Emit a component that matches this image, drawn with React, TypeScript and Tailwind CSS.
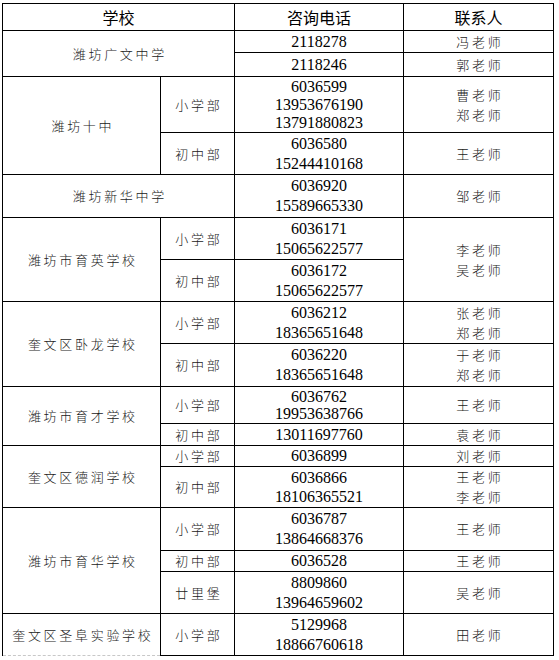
import * as React from "react";

const serif = "font-['Liberation_Serif','Times_New_Roman',serif] text-[16px] text-black";
const cjk = "font-['Noto_Sans_CJK_SC',sans-serif] font-light text-[13px] tracking-[2.7px] pl-[2.7px] text-[#1a1a1a]";
const head = "font-['Noto_Sans_CJK_SC',sans-serif] text-[16px] leading-[20px] text-black";

function Cell({
  children,
  className = "",
  rowSpan,
  colSpan,
}: {
  children?: React.ReactNode;
  className?: string;
  rowSpan?: number;
  colSpan?: number;
}) {
  return (
    <td
      rowSpan={rowSpan}
      colSpan={colSpan}
      className={`border border-black p-0 text-center align-middle ${className}`}
    >
      {children}
    </td>
  );
}

function Label({
  children,
  rowSpan,
  colSpan,
  className = "",
}: {
  children: React.ReactNode;
  rowSpan?: number;
  colSpan?: number;
  className?: string;
}) {
  return (
    <Cell rowSpan={rowSpan} colSpan={colSpan} className={`${cjk} leading-[18px] ${className}`}>
      {children}
    </Cell>
  );
}

function Phones({ lines, leading = "leading-[20px]" }: { lines: string[]; leading?: string }) {
  return (
    <Cell className={`${serif} ${leading}`}>
      {lines.map((line) => (
        <div key={line}>{line}</div>
      ))}
    </Cell>
  );
}

function Teachers({ names, rowSpan }: { names: string[]; rowSpan?: number }) {
  return (
    <Cell rowSpan={rowSpan} className={`${cjk} leading-[20px]`}>
      {names.map((name, i) => (
        <div key={`${name}-${i}`}>{name}</div>
      ))}
    </Cell>
  );
}

export default function App() {
  return (
    <div className="min-h-[660px] w-[559px] bg-white pl-[2px] pt-[3px]">
      <table className="w-[551px] table-fixed border-collapse">
        <colgroup>
          <col className="w-[158px]" />
          <col className="w-[74px]" />
          <col className="w-[169px]" />
          <col className="w-[150px]" />
        </colgroup>
        <tbody>
          <tr className="h-[27px]">
            <Cell colSpan={2} className={head}>
              学校
            </Cell>
            <Cell className={head}>咨询电话</Cell>
            <Cell className={head}>联系人</Cell>
          </tr>

          <tr className="h-[22px]">
            <Label rowSpan={2} colSpan={2}>
              潍坊广文中学
            </Label>
            <Phones lines={["2118278"]} leading="leading-[18px]" />
            <Teachers names={["冯老师"]} />
          </tr>
          <tr className="h-[24px]">
            <Phones lines={["2118246"]} leading="leading-[18px]" />
            <Teachers names={["郭老师"]} />
          </tr>

          <tr className="h-[56px]">
            <Label rowSpan={2}>潍坊十中</Label>
            <Label>小学部</Label>
            <Phones lines={["6036599", "13953676190", "13791880823"]} leading="leading-[18px]" />
            <Teachers names={["曹老师", "郑老师"]} />
          </tr>
          <tr className="h-[42px]">
            <Label>初中部</Label>
            <Phones lines={["6036580", "15244410168"]} />
            <Teachers names={["王老师"]} />
          </tr>

          <tr className="h-[43px]">
            <Label colSpan={2}>潍坊新华中学</Label>
            <Phones lines={["6036920", "15589665330"]} />
            <Teachers names={["邹老师"]} />
          </tr>

          <tr className="h-[42px]">
            <Label rowSpan={2}>潍坊市育英学校</Label>
            <Label>小学部</Label>
            <Phones lines={["6036171", "15065622577"]} />
            <Teachers names={["李老师", "吴老师"]} rowSpan={2} />
          </tr>
          <tr className="h-[42px]">
            <Label>初中部</Label>
            <Phones lines={["6036172", "15065622577"]} />
          </tr>

          <tr className="h-[42px]">
            <Label rowSpan={2}>奎文区卧龙学校</Label>
            <Label>小学部</Label>
            <Phones lines={["6036212", "18365651648"]} />
            <Teachers names={["张老师", "郑老师"]} />
          </tr>
          <tr className="h-[43px]">
            <Label>初中部</Label>
            <Phones lines={["6036220", "18365651648"]} />
            <Teachers names={["于老师", "郑老师"]} />
          </tr>

          <tr className="h-[37px]">
            <Label rowSpan={2}>潍坊市育才学校</Label>
            <Label>小学部</Label>
            <Phones lines={["6036762", "19953638766"]} leading="leading-[17.5px]" />
            <Teachers names={["王老师"]} />
          </tr>
          <tr className="h-[22px]">
            <Label>初中部</Label>
            <Phones lines={["13011697760"]} leading="leading-[18px]" />
            <Teachers names={["袁老师"]} />
          </tr>

          <tr className="h-[20px]">
            <Label rowSpan={2}>奎文区德润学校</Label>
            <Label>小学部</Label>
            <Phones lines={["6036899"]} leading="leading-[18px]" />
            <Teachers names={["刘老师"]} />
          </tr>
          <tr className="h-[41px]">
            <Label>初中部</Label>
            <Phones lines={["6036866", "18106365521"]} leading="leading-[19.5px]" />
            <Teachers names={["王老师", "李老师"]} />
          </tr>

          <tr className="h-[43px]">
            <Label rowSpan={3}>潍坊市育华学校</Label>
            <Label>小学部</Label>
            <Phones lines={["6036787", "13864668376"]} />
            <Teachers names={["王老师"]} />
          </tr>
          <tr className="h-[21px]">
            <Label>初中部</Label>
            <Phones lines={["6036528"]} leading="leading-[18px]" />
            <Teachers names={["王老师"]} />
          </tr>
          <tr className="h-[42px]">
            <Label>廿里堡</Label>
            <Phones lines={["8809860", "13964659602"]} />
            <Teachers names={["吴老师"]} />
          </tr>

          <tr className="h-[42px]">
            <Label className="border-b-[#c8c8c8] [border-bottom-style:dashed]">奎文区圣阜实验学校</Label>
            <Label>小学部</Label>
            <Phones lines={["5129968", "18866760618"]} />
            <Teachers names={["田老师"]} />
          </tr>
        </tbody>
      </table>
    </div>
  );
}
